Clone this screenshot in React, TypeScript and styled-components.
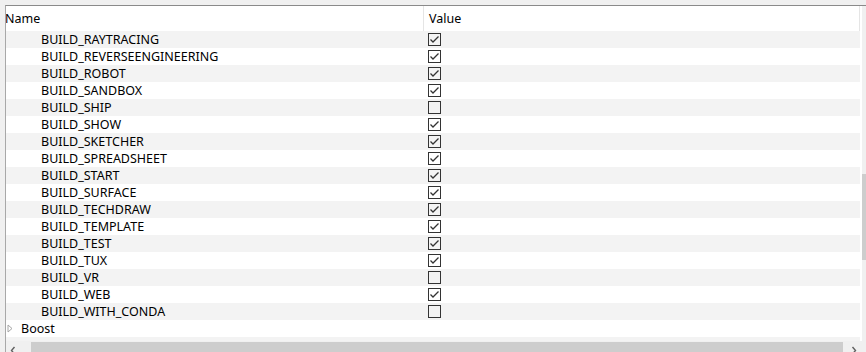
import React from "react";
import styled, { createGlobalStyle } from "styled-components";

const Global = createGlobalStyle`
  html, body { margin: 0; padding: 0; background: #f0f0f0; overflow: hidden; }
  #root { width: 866px; height: 352px; overflow: hidden; }
`;

const Window = styled.div`
  width: 866px;
  height: 352px;
  padding: 5px 0 0 5px;
  box-sizing: border-box;
  background: #f0f0f0;
  font-family: "Noto Sans", "Liberation Sans", sans-serif;
  font-size: 12.5px;
  color: #000;
`;

const Frame = styled.div`
  height: 100%;
  box-sizing: border-box;
  border-top: 1px solid #8a8a8a;
  border-left: 1px solid #a8a8a8;
  display: grid;
  grid-template-columns: 855px 1fr;
  grid-template-rows: 335px 1fr;
  background: #fff;
`;

const Viewport = styled.div`
  overflow: hidden;
  background: #fff;
`;

const Content = styled.div`
  margin-left: -2px;
  width: 856px;
`;

const Header = styled.div`
  display: grid;
  grid-template-columns: 420px 1fr;
  height: 25px;
  background: #fff;
`;

const HeaderCell = styled.div<{ $pad: number }>`
  display: flex;
  align-items: center;
  padding-left: ${(p) => p.$pad}px;
  border-right: 1px solid #e5e5e5;
  color: #000;
`;

const Row = styled.div<{ $alt: boolean }>`
  display: grid;
  grid-template-columns: 420px 1fr;
  height: 17px;
  background: ${(p) => (p.$alt ? "#f3f3f3" : "#fff")};
`;

const NameCell = styled.div<{ $indent: number }>`
  display: flex;
  align-items: center;
  padding-left: ${(p) => p.$indent}px;
  white-space: nowrap;
  position: relative;
`;

const ValueCell = styled.div`
  display: flex;
  align-items: flex-start;
  padding: 2px 0 0 4px;
`;

const Expander = styled.span`
  position: absolute;
  left: 3px;
  top: 4px;
  display: flex;
`;

const Box = styled.span`
  width: 13px;
  height: 13px;
  box-sizing: border-box;
  border: 1px solid #333;
  display: flex;
  align-items: center;
  justify-content: center;
`;

const VScroll = styled.div`
  background: #f0f0f0;
  border-left: 1px solid #fff;
  display: grid;
  grid-template-rows: 168px 86px 1fr;
  position: relative;
`;

const VThumb = styled.div`
  grid-row: 2;
  background: #cdcdcd;
`;

const ArrowTip = styled.span<{ $top: number }>`
  position: absolute;
  left: 4px;
  top: ${(p) => p.$top}px;
  width: 2px;
  height: 3px;
  background: #606060;
`;

const HScroll = styled.div`
  background: #f0f0f0;
  display: grid;
  grid-template-columns: 25px 812px 1fr;
  align-items: start;
  padding-top: 1px;
`;

const HArrow = styled.div<{ $right?: boolean }>`
  display: flex;
  justify-content: ${(p) => (p.$right ? "flex-end" : "flex-start")};
  padding: 4px ${(p) => (p.$right ? "4px" : "0")} 0 ${(p) => (p.$right ? "0" : "4px")};
`;

const HThumb = styled.div`
  height: 16px;
  background: #cdcdcd;
`;

const Corner = styled.div`
  background: #f0f0f0;
`;

const Check = () => (
  <svg width="11" height="11" viewBox="0 0 11 11">
    <polyline points="1.5,5.5 4,8 9.5,2.5" fill="none" stroke="#333" strokeWidth="1.3" />
  </svg>
);

const Chevron = ({ dir }: { dir: "left" | "right" }) => (
  <svg width="6" height="9" viewBox="0 0 6 9">
    {dir === "left" ? (
      <polyline points="4.5,1 1.5,4.5 4.5,8" fill="none" stroke="#606060" strokeWidth="1.4" />
    ) : (
      <polyline points="1.5,1 4.5,4.5 1.5,8" fill="none" stroke="#606060" strokeWidth="1.4" />
    )}
  </svg>
);

const TreeArrow = () => (
  <svg width="6" height="9" viewBox="0 0 6 9">
    <polygon points="1,1 5,4.5 1,8" fill="none" stroke="#a6a6a6" strokeWidth="1" />
  </svg>
);

const options: [string, boolean][] = [
  ["BUILD_RAYTRACING", true],
  ["BUILD_REVERSEENGINEERING", true],
  ["BUILD_ROBOT", true],
  ["BUILD_SANDBOX", true],
  ["BUILD_SHIP", false],
  ["BUILD_SHOW", true],
  ["BUILD_SKETCHER", true],
  ["BUILD_SPREADSHEET", true],
  ["BUILD_START", true],
  ["BUILD_SURFACE", true],
  ["BUILD_TECHDRAW", true],
  ["BUILD_TEMPLATE", true],
  ["BUILD_TEST", true],
  ["BUILD_TUX", true],
  ["BUILD_VR", false],
  ["BUILD_WEB", true],
  ["BUILD_WITH_CONDA", false],
];

const groups = ["Boost", "CMAKE"];

export default function App() {
  return (
    <>
      <Global />
      <Window>
        <Frame>
          <Viewport>
            <Content>
              <Header>
                <HeaderCell $pad={1}>Name</HeaderCell>
                <HeaderCell $pad={5}>Value</HeaderCell>
              </Header>
              {options.map(([name, on], i) => (
                <Row key={name} $alt={i % 2 === 0}>
                  <NameCell $indent={37}>{name}</NameCell>
                  <ValueCell>
                    <Box>{on && <Check />}</Box>
                  </ValueCell>
                </Row>
              ))}
              {groups.map((g, j) => (
                <Row key={g} $alt={(options.length + j) % 2 === 0}>
                  <NameCell $indent={17}>
                    <Expander>
                      <TreeArrow />
                    </Expander>
                    {g}
                  </NameCell>
                  <ValueCell />
                </Row>
              ))}
            </Content>
          </Viewport>
          <VScroll>
            <ArrowTip $top={8} />
            <VThumb />
            <ArrowTip $top={326} />
          </VScroll>
          <HScroll>
            <HArrow>
              <Chevron dir="left" />
            </HArrow>
            <HThumb />
            <HArrow $right>
              <Chevron dir="right" />
            </HArrow>
          </HScroll>
          <Corner />
        </Frame>
      </Window>
    </>
  );
}
